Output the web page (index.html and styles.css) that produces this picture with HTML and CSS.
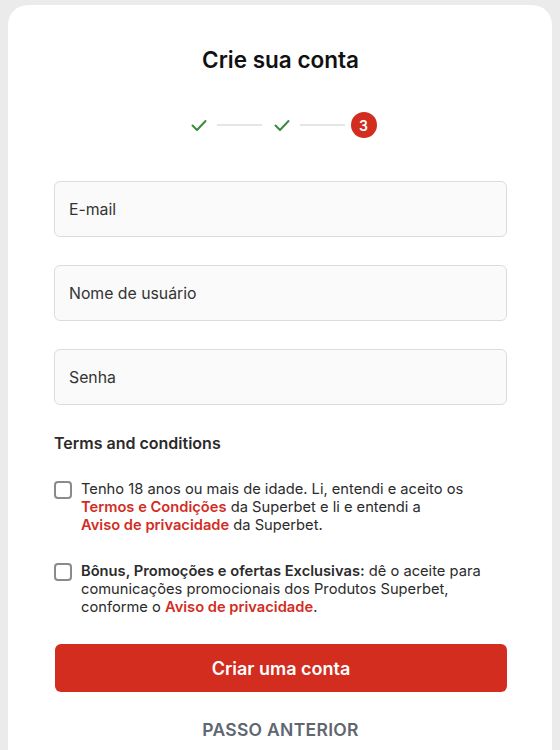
FILE: index.html
```html
<!DOCTYPE html>
<html lang="pt-BR">
<head>
<meta charset="utf-8">
<title>Crie sua conta</title>
<link rel="stylesheet" href="styles.css">
</head>
<body>
<div class="card">
  <h1 class="title">Crie sua conta</h1>
  <div class="stepper">
    <svg class="check" width="20" height="20" viewBox="0 0 20 20"><path d="M3.5 10.5 L8 15 L16.5 6" fill="none" stroke="#3c8a3c" stroke-width="2" stroke-linecap="round" stroke-linejoin="round"/></svg>
    <span class="line"></span>
    <svg class="check" width="20" height="20" viewBox="0 0 20 20"><path d="M3.5 10.5 L8 15 L16.5 6" fill="none" stroke="#3c8a3c" stroke-width="2" stroke-linecap="round" stroke-linejoin="round"/></svg>
    <span class="line"></span>
    <span class="step-num">3</span>
  </div>
  <form class="form">
    <div class="field">E-mail</div>
    <div class="field">Nome de usuário</div>
    <div class="field">Senha</div>
    <h2 class="terms-title">Terms and conditions</h2>
    <label class="check-row">
      <span class="box"></span>
      <span class="check-text">Tenho 18 anos ou mais de idade. Li, entendi e aceito os <a class="link">Termos e Condições</a> da Superbet e li e entendi a <a class="link">Aviso de privacidade</a> da Superbet.</span>
    </label>
    <label class="check-row">
      <span class="box"></span>
      <span class="check-text"><b>Bônus, Promoções e ofertas Exclusivas:</b> dê o aceite para comunicações promocionais dos Produtos Superbet, conforme o <a class="link">Aviso de privacidade</a>.</span>
    </label>
    <button type="button" class="submit">Criar uma conta</button>
    <div class="back">PASSO ANTERIOR</div>
  </form>
</div>
</body>
</html>
```

FILE: styles.css
```css
html, body {
  margin: 0;
  padding: 0;
}
body {
  background: #ebebeb;
  font-family: Inter, "Noto Sans", "Liberation Sans", sans-serif;
  color: #1f1f1f;
  padding: 5px 8px 0 8px;
  height: 750px;
  box-sizing: border-box;
  overflow: hidden;
}
.card {
  background: #fff;
  border-radius: 20px 20px 0 0;
  height: 800px;
  padding: 42px 45px 0 46px;
  box-sizing: border-box;
}
.title {
  margin: 0;
  text-align: center;
  font-size: 22.5px;
  font-weight: 600;
  color: #111;
  line-height: 26px;
}
.stepper {
  display: flex;
  align-items: center;
  justify-content: center;
  margin-top: 39px;
  height: 26px;
  padding-left: 4px;
}
.check {
  display: block;
}
.line {
  width: 45px;
  height: 2px;
  background: #e6e6e6;
}
.stepper .check:first-child { margin-right: 8px; }
.stepper .line:nth-of-type(1) { margin-right: 10px; }
.stepper .check:nth-of-type(2) { margin-right: 8px; }
.stepper .line:nth-of-type(2) { margin-right: 6px; }
.step-num {
  width: 26px;
  height: 26px;
  border-radius: 50%;
  background: #d22d1f;
  color: #fff;
  font-size: 14px;
  font-weight: 600;
  display: flex;
  align-items: center;
  justify-content: center;
}
.form {
  margin-top: 43px;
  display: flex;
  flex-direction: column;
}
.field {
  height: 56px;
  box-sizing: border-box;
  border: 1px solid #dcdcdc;
  border-radius: 6px;
  background: #fafafa;
  padding: 0 14px;
  display: flex;
  align-items: center;
  font-size: 15.8px;
  color: #333;
  margin-bottom: 28px;
}
.terms-title {
  margin: 0;
  font-size: 16px;
  font-weight: 600;
  color: #2b2b2b;
  line-height: 20px;
}
.check-row {
  display: flex;
  gap: 9px;
  margin-top: 27px;
  align-items: flex-start;
}
.check-row + .check-row {
  margin-top: 28px;
}
.box {
  flex: none;
  width: 18px;
  height: 18px;
  box-sizing: border-box;
  border: 2px solid #8a8a8a;
  border-radius: 4px;
  margin-top: 1px;
}
.check-text {
  font-size: 14.7px;
  line-height: 18px;
  color: #2b2b2b;
}
.check-text b {
  font-weight: 600;
}
.link {
  color: #d22d1f;
  font-weight: 600;
  white-space: nowrap;
}
.submit {
  margin-top: 28px;
  margin-left: 1px;
  height: 48px;
  border: none;
  border-radius: 6px;
  background: #d22d1f;
  color: #fff;
  font-family: inherit;
  font-size: 18px;
  font-weight: 600;
}
.back {
  margin-top: 27px;
  text-align: center;
  font-size: 17.5px;
  font-weight: 600;
  color: #5f6670;
  letter-spacing: 0.3px;
}
```
